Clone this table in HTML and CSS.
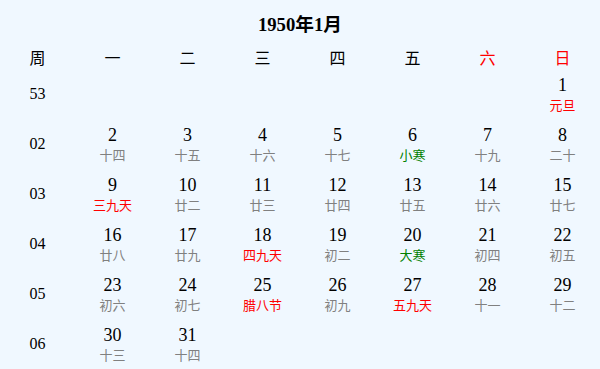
FILE: index.html
```html
<!DOCTYPE html>
<html lang="zh">
<head>
<meta charset="utf-8">
<title>1950年1月</title>
<link rel="stylesheet" href="styles.css">
</head>
<body>
<div class="calendar">
  <h3 class="title">1950年1月</h3>
  <div class="grid">
    <div class="head">周</div>
    <div class="head">一</div>
    <div class="head">二</div>
    <div class="head">三</div>
    <div class="head">四</div>
    <div class="head">五</div>
    <div class="head red">六</div>
    <div class="head red">日</div>

    <div class="week">53</div>
    <div class="day"></div><div class="day"></div><div class="day"></div><div class="day"></div><div class="day"></div><div class="day"></div>
    <div class="day"><span class="num">1</span><span class="lunar red">元旦</span></div>

    <div class="week">02</div>
    <div class="day"><span class="num">2</span><span class="lunar">十四</span></div>
    <div class="day"><span class="num">3</span><span class="lunar">十五</span></div>
    <div class="day"><span class="num">4</span><span class="lunar">十六</span></div>
    <div class="day"><span class="num">5</span><span class="lunar">十七</span></div>
    <div class="day"><span class="num">6</span><span class="lunar green">小寒</span></div>
    <div class="day"><span class="num">7</span><span class="lunar">十九</span></div>
    <div class="day"><span class="num">8</span><span class="lunar">二十</span></div>

    <div class="week">03</div>
    <div class="day"><span class="num">9</span><span class="lunar red">三九天</span></div>
    <div class="day"><span class="num">10</span><span class="lunar">廿二</span></div>
    <div class="day"><span class="num">11</span><span class="lunar">廿三</span></div>
    <div class="day"><span class="num">12</span><span class="lunar">廿四</span></div>
    <div class="day"><span class="num">13</span><span class="lunar">廿五</span></div>
    <div class="day"><span class="num">14</span><span class="lunar">廿六</span></div>
    <div class="day"><span class="num">15</span><span class="lunar">廿七</span></div>

    <div class="week">04</div>
    <div class="day"><span class="num">16</span><span class="lunar">廿八</span></div>
    <div class="day"><span class="num">17</span><span class="lunar">廿九</span></div>
    <div class="day"><span class="num">18</span><span class="lunar red">四九天</span></div>
    <div class="day"><span class="num">19</span><span class="lunar">初二</span></div>
    <div class="day"><span class="num">20</span><span class="lunar green">大寒</span></div>
    <div class="day"><span class="num">21</span><span class="lunar">初四</span></div>
    <div class="day"><span class="num">22</span><span class="lunar">初五</span></div>

    <div class="week">05</div>
    <div class="day"><span class="num">23</span><span class="lunar">初六</span></div>
    <div class="day"><span class="num">24</span><span class="lunar">初七</span></div>
    <div class="day"><span class="num">25</span><span class="lunar red">腊八节</span></div>
    <div class="day"><span class="num">26</span><span class="lunar">初九</span></div>
    <div class="day"><span class="num">27</span><span class="lunar red">五九天</span></div>
    <div class="day"><span class="num">28</span><span class="lunar">十一</span></div>
    <div class="day"><span class="num">29</span><span class="lunar">十二</span></div>

    <div class="week">06</div>
    <div class="day"><span class="num">30</span><span class="lunar">十三</span></div>
    <div class="day"><span class="num">31</span><span class="lunar">十四</span></div>
    <div class="day"></div><div class="day"></div><div class="day"></div><div class="day"></div><div class="day"></div>
  </div>
</div>
</body>
</html>
```

FILE: styles.css
```css
html, body {
  margin: 0;
  padding: 0;
  background: #f0f8ff;
}
body {
  font-family: "Liberation Serif", "Noto Sans CJK SC", serif;
  color: #000;
  width: 600px;
  height: 369px;
  overflow: hidden;
}
.title {
  margin: 0;
  height: 49px;
  line-height: 49px;
  text-align: center;
  font-size: 18.72px;
  font-weight: bold;
}
.grid {
  display: grid;
  grid-template-columns: repeat(8, 75px);
  grid-template-rows: 20px repeat(6, 50px);
}
.head {
  font-size: 16px;
  line-height: 20px;
  text-align: center;
}
.week {
  font-size: 16px;
  display: flex;
  align-items: center;
  justify-content: center;
}
.day {
  display: flex;
  flex-direction: column;
  align-items: center;
  justify-content: center;
}
.num {
  font-size: 18px;
  line-height: 20px;
}
.lunar {
  margin-top: 2px;
  font-size: 13px;
  line-height: 16px;
  color: #808080;
  font-family: "Noto Sans CJK SC", sans-serif;
}
.red { color: #ff0000; }
.green { color: #008000; }
```
